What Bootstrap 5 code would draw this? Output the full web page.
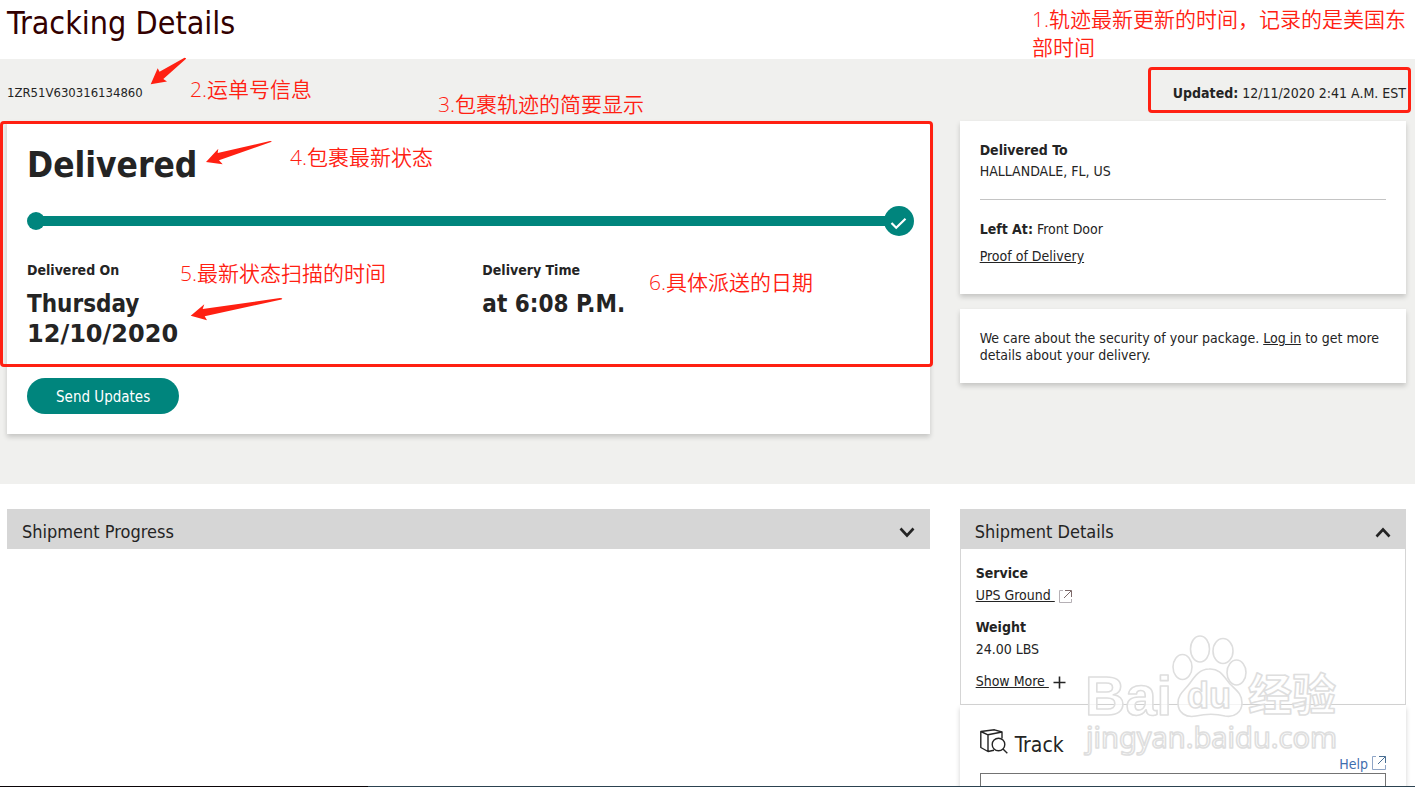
<!DOCTYPE html>
<html lang="en">
<head>
<meta charset="utf-8">
<meta name="viewport" content="width=device-width, initial-scale=1">
<title>Tracking Details</title>
<link rel="stylesheet" href="https://cdn.jsdelivr.net/npm/bootstrap@5.3.0/dist/css/bootstrap.min.css">
<style>
  :root { --teal: #00857d; --ink: #242424; --note: #ff2012; --line: #d5d5d5; }
  body { font: 14px/20px "DejaVu Sans Condensed", "DejaVu Sans", sans-serif; font-stretch: condensed; color: var(--ink); background: #fff; }
  .page-pad { padding-left: 7px; padding-right: 9px; }
  .page-row { --bs-gutter-x: 30px; }
  .page-title { font-size: 32px; line-height: 46px; color: #330000; }
  .page-head { height: 59px; }
  .summary { background: #f0f0ee; padding-bottom: 50px; }
  .meta-row { padding: 24px 0 18px; }
  .track-no { font-size: 13px; }
  .panel { background: #fff; box-shadow: 0 3px 5px rgba(0,0,0,.18); }
  .status-panel { padding: 20px 16px 20px 20px; }
  .status-title { font-size: 35px; line-height: 48px; font-weight: 700; }
  .track-line { height: 30px; margin: 17px 0 24px; }
  .track-line .dot-start { width: 18px; height: 18px; background: var(--teal); }
  .track-line .bar-line { height: 10px; background: var(--teal); margin: 0 -4px; }
  .track-line .dot-end { width: 30px; height: 30px; background: var(--teal); }
  .big-value { font-size: 24px; line-height: 30px; font-weight: 700; margin-top: 9px; }
  .wide-face { font-family: "DejaVu Sans", sans-serif; font-stretch: normal; }
  .btn-teal { --bs-btn-bg: var(--teal); --bs-btn-color: #fff; --bs-btn-hover-bg: #006e67; --bs-btn-hover-color: #fff; --bs-btn-border-width: 0; --bs-btn-padding-x: 29px; --bs-btn-font-size: 15px; --bs-btn-line-height: 20px; margin-top: 29px; padding-top: 9px; padding-bottom: 7px; }
  .link-ink { color: var(--ink); text-decoration: underline; }
  .info-panel { padding: 19px 20px 27px; line-height: 21px; }
  .info-panel hr { margin: 17px 0 19px; border-color: #c4c4c4; opacity: 1; }
  .proof { margin-top: 6px; }
  .care-panel { margin-top: 15px; padding: 21px 20px 19px; line-height: 17px; }
  .details { padding-top: 25px; }
  .bar-btn { background: #d6d6d6; color: var(--ink); border: 0; padding: 12px 15px 6px; font-size: 18px; line-height: 22px; text-align: left; }
  .detail-body { border: 1px solid var(--line); border-top: 0; padding: 13px 15px 12px; line-height: 22px; }
  .detail-body dl, .detail-body dd { margin: 0; }
  .detail-body dd { margin-bottom: 10px; }
  .track-panel { padding: 24px 20px 20px; }
  .track-head { height: 44px; }
  .track-head h2 { font-size: 21px; line-height: 32px; font-weight: 400; margin: 0 0 0 7px; }
  .help-link { color: #3f6eae; text-decoration: none; line-height: 18px; }
  .help-link svg { vertical-align: -1px; }
  .track-input { height: 30px; border: 1px solid #737373; }
  .task-strip { height: 1px; background: linear-gradient(90deg, #0a0508 26%, #2c4250 26%); }
  /* red review notes laid over the page */
  .note-text { position: absolute; color: var(--note); font: 350 21px/28px "Open Sans", "Noto Sans CJK SC", sans-serif; white-space: nowrap; }
  .note-box { position: absolute; border: 3px solid var(--note); border-radius: 4px; pointer-events: none; }
  .note-arrow { position: absolute; fill: var(--note); }
  .n1 { right: 9px; top: 5px; }
  .n2 { left: 190px; top: 16px; }
  .n3 { left: 438px; top: 31px; }
  .n4 { left: 283px; top: 22px; }
  .n5 { left: 173px; top: 138px; }
  .n6 { left: 642px; top: 147px; }
  .box-updated { right: 4px; top: 8px; width: 263px; height: 46px; }
  .box-status { left: -7px; right: -3px; top: 0; height: 246px; }
  .a2 { left: 150px; top: -2px; }
  .a4 { left: 198px; top: 19px; }
  .a5 { left: 183px; top: 176px; }
  .watermark { position: absolute; right: 81px; top: 121px; pointer-events: none; }
</style>
</head>
<body class="vh-100 overflow-hidden">
<header class="page-head page-pad position-relative">
  <h1 class="page-title fw-normal m-0">Tracking Details</h1>
  <div class="note-text n1" lang="zh-CN">1.轨迹最新更新的时间，记录的是美国东<br>部时间</div>
</header>

<main>
  <section class="summary page-pad position-relative">
    <div class="meta-row d-flex justify-content-between">
      <span class="track-no">1ZR51V630316134860</span>
      <span><strong>Updated:</strong> 12/11/2020 2:41 A.M. EST</span>
    </div>
    <div class="row page-row">
      <div class="col-8">
        <div class="panel status-panel position-relative">
          <h2 class="status-title m-0">Delivered</h2>
          <div class="track-line d-flex align-items-center">
            <span class="dot-start rounded-circle"></span>
            <span class="bar-line flex-grow-1"></span>
            <span class="dot-end rounded-circle">
              <svg class="d-block" width="30" height="30" viewBox="0 0 30 30" fill="none" stroke="#fff" stroke-width="2.200" aria-hidden="true"><path d="M7.500 17l4.700 4.700 9.300-9"/></svg>
            </span>
          </div>
          <div class="row">
            <div class="col-6">
              <strong>Delivered On</strong>
              <div class="big-value">Thursday<br><span class="wide-face">12/10/2020</span></div>
            </div>
            <div class="col-6">
              <strong>Delivery Time</strong>
              <div class="big-value">at 6:08 P.M.</div>
            </div>
          </div>
          <button type="button" class="btn btn-teal rounded-pill d-block">Send Updates</button>

          <div class="note-box box-status"></div>
          <div class="note-text n4" lang="zh-CN">4.包裹最新状态</div>
          <div class="note-text n5" lang="zh-CN">5.最新状态扫描的时间</div>
          <div class="note-text n6" lang="zh-CN">6.具体派送的日期</div>
          <svg class="note-arrow a4" width="68" height="26" aria-hidden="true"><path d="M1 22L13.300 8.700L12.700 13L65 1Q68 1 66 2L14 20.300L17.700 24.300Z"/></svg>
          <svg class="note-arrow a5" width="94" height="26" aria-hidden="true"><path d="M.7 18.700L14.300 7.300L12.700 12L90 1Q93.500 1 91.500 2.500L14.700 19.300L17 23.300Z"/></svg>
        </div>
      </div>
      <div class="col-4">
        <div class="panel info-panel">
          <strong>Delivered To</strong>
          <div>HALLANDALE, FL, US</div>
          <hr>
          <div><strong>Left At:</strong> Front Door</div>
          <div class="proof"><a class="link-ink" href="#">Proof of Delivery</a></div>
        </div>
        <div class="panel care-panel">We care about the security of your package. <a class="link-ink" href="#">Log in</a> to get more details about your delivery.</div>
      </div>
    </div>
    <div class="note-box box-updated"></div>
    <div class="note-text n2" lang="zh-CN">2.运单号信息</div>
    <div class="note-text n3" lang="zh-CN">3.包裹轨迹的简要显示</div>
    <svg class="note-arrow a2" width="38" height="30" aria-hidden="true"><path d="M.7 27.300L7.700 11.300L9.500 14.700L34.500 .7Q37 .7 35.500 2.300L13.300 22L17 24.500Z"/></svg>
  </section>

  <section class="details page-pad">
    <div class="row page-row">
      <div class="col-8">
        <button type="button" class="bar-btn w-100 d-flex justify-content-between align-items-center" aria-expanded="false">
          <span>Shipment Progress</span>
          <svg width="16" height="12" viewBox="0 0 16 12" fill="none" stroke="#242424" stroke-width="2.600" aria-hidden="true"><path d="M1.500 2.500L8 9.500l6.500-7"/></svg>
        </button>
      </div>
      <div class="col-4 position-relative">
        <button type="button" class="bar-btn w-100 d-flex justify-content-between align-items-center" aria-expanded="true">
          <span>Shipment Details</span>
          <svg width="16" height="12" viewBox="0 0 16 12" fill="none" stroke="#242424" stroke-width="2.600" aria-hidden="true"><path d="M1.500 10.500L8 3.500l6.500 7"/></svg>
        </button>
        <div class="detail-body">
          <dl>
            <dt>Service</dt>
            <dd><a class="link-ink" href="#">UPS Ground&nbsp;</a>
              <svg class="align-middle" width="13" height="13" viewBox="0 0 13 13" fill="none" aria-hidden="true"><path d="M4 .5H.5v12h12V9" stroke="#b5b0b5"/><path d="M6 .5h6.500V7M12 1L5 8" stroke="#7d6a6a"/></svg></dd>
            <dt>Weight</dt>
            <dd>24.00 LBS</dd>
          </dl>
          <a class="link-ink" href="#">Show More&nbsp;</a>
          <svg width="13" height="13" viewBox="0 0 13 13" class="align-middle" stroke="#242424" stroke-width="1.600" aria-hidden="true"><path d="M6.500 0.500v12M.5 6.500h12"/></svg>
        </div>
        <div class="panel track-panel">
          <div class="track-head d-flex justify-content-between">
            <div class="d-flex align-items-start">
              <svg width="28" height="26" viewBox="0 0 28 26" fill="none" stroke="#242424" stroke-width="1.400" stroke-linejoin="round" aria-hidden="true"><path d="M.8 2.500L14.500 .8 22 3 8 5.800zM.8 2.500V18.500l7.200 4V5.800M22 3V9.500M8 22.500l6-1.200"/><circle cx="18.500" cy="15.500" r="6.300"/><path d="M23 20l4.300 4.300"/></svg>
              <h2>Track</h2>
            </div>
            <a class="help-link align-self-end" href="#">Help
              <svg width="14" height="14" viewBox="0 0 14 14" fill="none" aria-hidden="true"><path d="M4 .5H.5v13h13V9" stroke="#8fa5c6"/><path d="M7 .5h6.500V7M13.500 .5L6 8" stroke="#4a6f94"/></svg></a>
          </div>
          <input type="text" class="track-input w-100 d-block" aria-label="Tracking number">
        </div>
        <svg class="watermark" width="260" height="130" aria-hidden="true" fill="#fff" fill-opacity=".75" stroke="#dedede" stroke-width="1.600" stroke-linejoin="round">
          <text x="5" y="85" font-family="Liberation Sans, sans-serif" font-weight="700" font-size="56">Bai</text>
          <ellipse cx="120" cy="19" rx="9.500" ry="13"/><ellipse cx="143" cy="21" rx="10" ry="12.500"/><ellipse cx="102.500" cy="37" rx="9.500" ry="12.500"/><ellipse cx="156.500" cy="42.500" rx="9.500" ry="12.500"/>
          <path d="M129 39C140 38 144 47 150 54C157 61 162 64 162 73C162 82 154 88 145 86C133 83 125 84 116 86C106 88 98 83 98 73C98 64 105 60 110 53C115 46 120 39 129 39Z"/>
          <text x="107" y="78" font-family="Liberation Sans, sans-serif" font-size="36" font-weight="700">du</text>
          <text x="168" y="81" font-family="Noto Sans CJK SC, sans-serif" font-size="44" font-weight="700">经验</text>
          <text x="6" y="118" font-family="Noto Sans, sans-serif" font-size="29">jingyan.baidu.com</text>
        </svg>
      </div>
    </div>
  </section>
</main>
<footer class="task-strip fixed-bottom"></footer>
<script src="https://cdn.jsdelivr.net/npm/bootstrap@5.3.0/dist/js/bootstrap.bundle.min.js"></script>
</body>
</html>
